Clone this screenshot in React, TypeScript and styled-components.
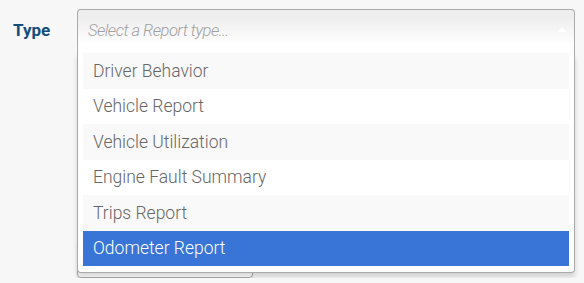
import styled, { createGlobalStyle } from "styled-components";

const GlobalStyle = createGlobalStyle`
  html, body {
    margin: 0;
    background: #f7f7f7;
    font-family: Roboto, "Noto Sans", Arial, sans-serif;
  }
`;

const reportTypes = [
  "Driver Behavior",
  "Vehicle Report",
  "Vehicle Utilization",
  "Engine Fault Summary",
  "Trips Report",
  "Odometer Report",
];

const Page = styled.div`
  padding: 9px 0 0 13px;
`;

const FormRow = styled.div`
  display: flex;
  align-items: center;
`;

const Label = styled.label`
  width: 64px;
  font-size: 17px;
  font-weight: 700;
  color: #134d7f;
  margin-top: -3px;
`;

const Chosen = styled.div`
  position: relative;
  width: 498px;
  z-index: 2;
`;

const Single = styled.div`
  position: relative;
  box-sizing: border-box;
  height: 44px;
  padding: 0 10px;
  display: flex;
  align-items: center;
  border: 1px solid #aaa;
  border-bottom: none;
  border-radius: 4px 4px 0 0;
  background: linear-gradient(#eeeeee 20%, #ffffff 80%);
`;

const Placeholder = styled.span`
  font-size: 16.5px;
  letter-spacing: -0.5px;
  font-style: italic;
  font-weight: 300;
  color: #a0a0a0;
  margin-top: -3px;
`;

const Arrow = styled.span`
  position: absolute;
  right: 8px;
  top: 17px;
  width: 0;
  height: 0;
  border-left: 4px solid transparent;
  border-right: 4px solid transparent;
  border-bottom: 5px solid #fff;
`;

const Drop = styled.div`
  position: absolute;
  top: 100%;
  left: 0;
  right: 0;
  box-sizing: border-box;
  border: 1px solid #aaa;
  border-top: none;
  border-radius: 0 0 4px 4px;
  background: #fff;
  box-shadow: 0 4px 5px rgba(0, 0, 0, 0.15);
  padding: 0 5px 6px;
`;

const Results = styled.ul`
  margin: 0;
  padding: 0;
  list-style: none;
`;

const Result = styled.li<{ highlighted?: boolean; odd?: boolean }>`
  height: 35.5px;
  padding: 0 10px;
  display: flex;
  align-items: center;
  font-size: 17.5px;
  font-weight: 300;
  color: ${(p) => (p.highlighted ? "#fff" : "#666")};
  background: ${(p) =>
    p.highlighted ? "#3875d7" : p.odd ? "#f9f9f9" : "#fff"};
`;

const NextField = styled.div`
  margin: 189px 0 0 64px;
  box-sizing: border-box;
  width: 176px;
  height: 36px;
  border: 1px solid #aaa;
  border-radius: 4px;
  background: #fff;
  box-shadow: 0 1px 2px rgba(0, 0, 0, 0.1);
`;

const App = () => {
  return (
    <Page>
      <GlobalStyle />
      <FormRow>
        <Label>Type</Label>
        <Chosen>
          <Single>
            <Placeholder>Select a Report type...</Placeholder>
            <Arrow />
          </Single>
          <Drop>
            <Results>
              {reportTypes.map((t, i) => (
                <Result key={t} odd={i % 2 === 0} highlighted={i === 5}>
                  {t}
                </Result>
              ))}
            </Results>
          </Drop>
        </Chosen>
      </FormRow>
      <NextField />
    </Page>
  );
};

export default App;
